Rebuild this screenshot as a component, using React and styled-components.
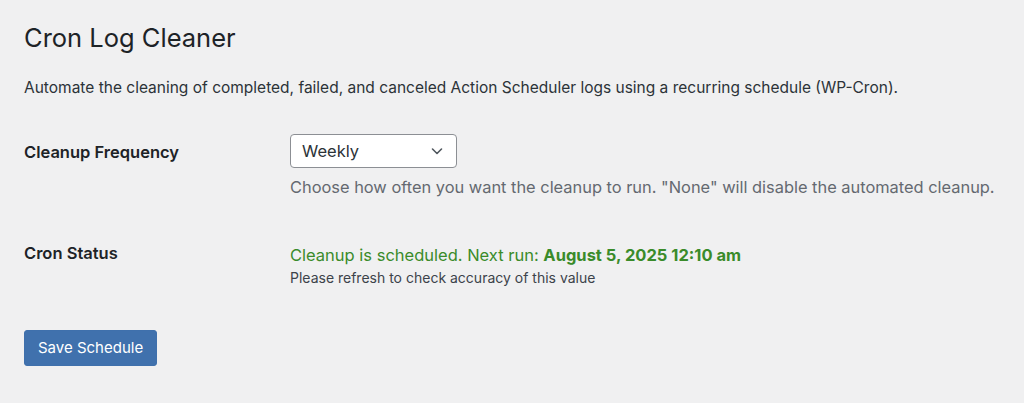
import React from 'react';
import styled, { createGlobalStyle } from 'styled-components';

const GlobalStyle = createGlobalStyle`
  html, body {
    margin: 0;
    padding: 0;
    background: #f0f0f1;
  }
  body {
    font-family: Inter, "Noto Sans", "Liberation Sans", sans-serif;
    color: #1d2327;
  }
`;

const Wrap = styled.div`
  padding: 21px 24px 0 24px;
  height: 403px;
  box-sizing: border-box;
`;

const Title = styled.h1`
  margin: 0;
  font-size: 25.5px;
  font-weight: 400;
  line-height: 34px;
  color: #1d2327;
`;

const Intro = styled.p`
  margin: 23px 0 0 0;
  font-size: 15.5px;
  line-height: 20px;
  color: #2c3338;
`;

const FormTable = styled.div`
  display: grid;
  grid-template-columns: 266px 1fr;
  row-gap: 45px;
  margin-top: 36px;
`;

const Label = styled.div`
  font-size: 16.5px;
  font-weight: 600;
  line-height: 20px;
  padding-top: ${p => p.offset || 0}px;
  color: #1d2327;
`;

const Field = styled.div`
  display: flex;
  flex-direction: column;
  align-items: flex-start;
`;

const SelectBox = styled.div`
  width: 167px;
  height: 34px;
  box-sizing: border-box;
  border: 1px solid #8c8f94;
  border-radius: 4px;
  background: #fff;
  display: flex;
  align-items: center;
  justify-content: space-between;
  padding: 0 12px 0 11px;
  font-size: 16.5px;
  color: #2c3338;
`;

const Help = styled.p`
  margin: 8px 0 0 0;
  font-size: 16.4px;
  line-height: 22px;
  color: #646970;
`;

const Status = styled.div`
  font-size: 16.5px;
  line-height: 20px;
  color: #3a8b2a;
  padding-top: 2px;

  strong {
    font-weight: 700;
  }
`;

const Note = styled.div`
  margin-top: 4px;
  font-size: 14px;
  line-height: 18px;
  color: #3c434a;
`;

const SaveButton = styled.button`
  margin-top: 43px;
  height: 36px;
  padding: 0 13px;
  border: 1px solid #3f70ac;
  border-radius: 3px;
  background: #4071ad;
  color: #fff;
  font-family: inherit;
  font-size: 15px;
  line-height: 34px;
`;

const Chevron = () => (
  <svg width="14" height="14" viewBox="0 0 14 14" fill="none">
    <path d="M2.5 5l4.5 4.5L11.5 5" stroke="#50575e" strokeWidth="1.6" strokeLinecap="round" strokeLinejoin="round" />
  </svg>
);

export default function App() {
  return (
    <Wrap>
      <GlobalStyle />
      <Title>Cron Log Cleaner</Title>
      <Intro>
        Automate the cleaning of completed, failed, and canceled Action Scheduler logs using a recurring schedule (WP-Cron).
      </Intro>
      <FormTable>
        <Label offset={8}>Cleanup Frequency</Label>
        <Field>
          <SelectBox>
            <span>Weekly</span>
            <Chevron />
          </SelectBox>
          <Help>Choose how often you want the cleanup to run. "None" will disable the automated cleanup.</Help>
        </Field>
        <Label>Cron Status</Label>
        <Field>
          <Status>
            Cleanup is scheduled. Next run: <strong>August 5, 2025 12:10 am</strong>
          </Status>
          <Note>Please refresh to check accuracy of this value</Note>
        </Field>
      </FormTable>
      <SaveButton>Save Schedule</SaveButton>
    </Wrap>
  );
}
